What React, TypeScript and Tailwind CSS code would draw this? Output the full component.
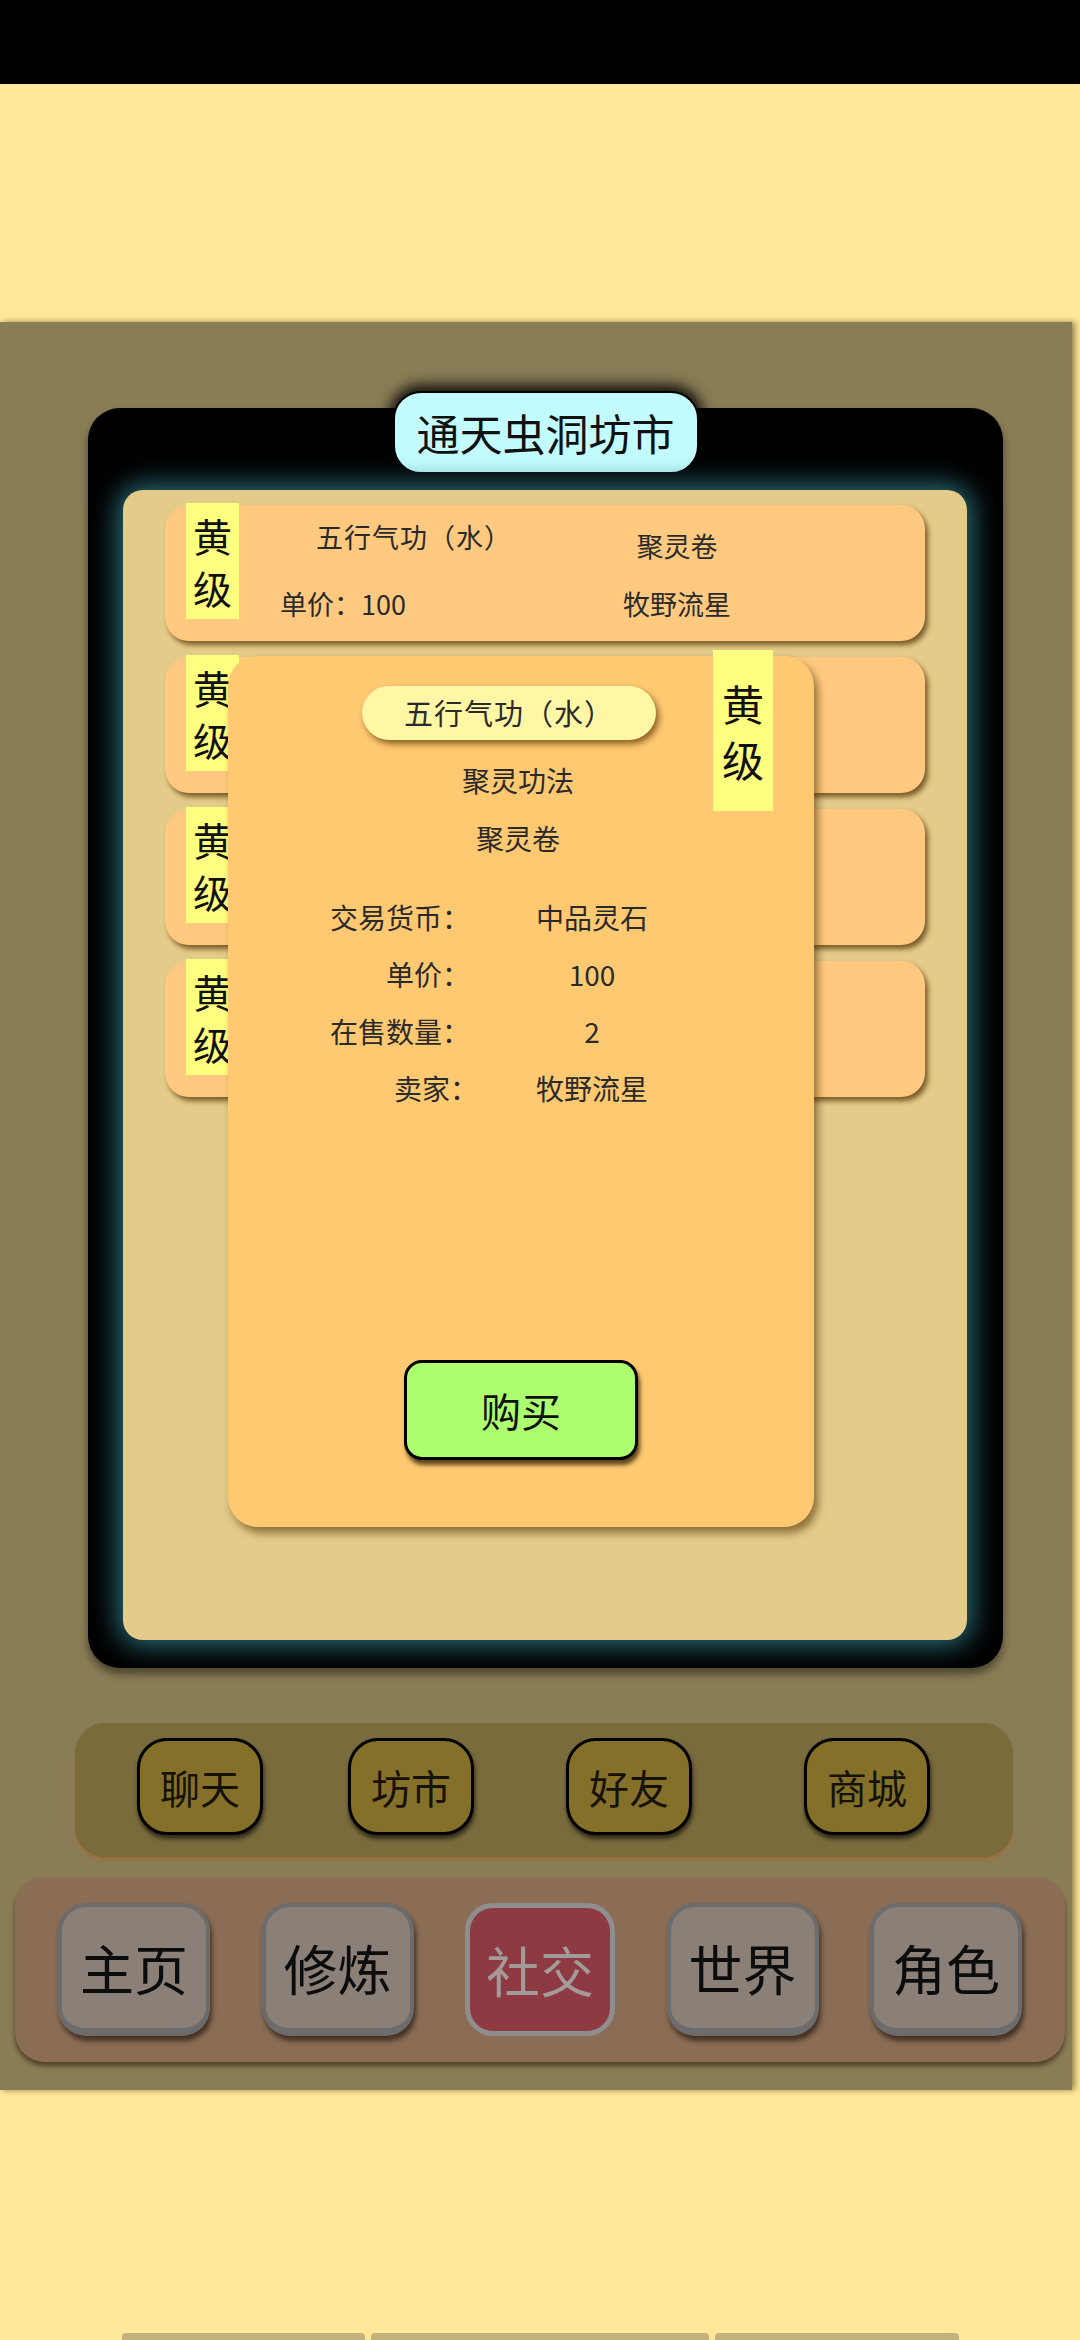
const font = "font-[family-name:'Noto_Sans_CJK_SC','Noto_Sans',sans-serif]"

// only the first row is visible above the modal; the rest are covered
const listings = [
  { name: '五行气功（水）', kind: '聚灵卷', price: 100, seller: '牧野流星', covered: false },
  { name: '五行气功（水）', kind: '聚灵卷', price: 100, seller: '牧野流星', covered: true },
  { name: '五行气功（水）', kind: '聚灵卷', price: 100, seller: '牧野流星', covered: true },
  { name: '五行气功（水）', kind: '聚灵卷', price: 100, seller: '牧野流星', covered: true },
]

const details = [
  { label: '交易货币：', value: '中品灵石', labelW: 'w-[242px]', gap: 'ml-[62px]' },
  { label: '单价：', value: '100', labelW: 'w-[242px]', gap: 'ml-[62px]' },
  { label: '在售数量：', value: '2', labelW: 'w-[242px]', gap: 'ml-[62px]' },
  { label: '卖家：', value: '牧野流星', labelW: 'w-[250px]', gap: 'ml-[54px]' },
]

const subTabs = [
  { label: '聊天', ml: 'ml-[62px]' },
  { label: '坊市', ml: 'ml-[85px]' },
  { label: '好友', ml: 'ml-[92px]' },
  { label: '商城', ml: 'ml-[112px]' },
]

const mainTabs = ['主页', '修炼', '社交', '世界', '角色']

function GradeBadge({ big }: { big?: boolean }) {
  return (
    <div
      className={
        big
          ? 'w-[60px] h-[161px] bg-[#ffff80] flex flex-col items-center justify-center text-[42px] leading-[56px] text-[#111]'
          : 'w-[53px] h-[116px] bg-[#ffff80] flex flex-col items-center justify-center text-[39px] leading-[52px] text-[#111]'
      }
    >
      <span>黄</span>
      <span>级</span>
    </div>
  )
}

function ListingRow({ item }: { item: (typeof listings)[number] }) {
  return (
    <div className="w-[760px] h-[136px] shrink-0 rounded-[24px] bg-[#ffca80] shadow-[3px_4px_5px_rgba(90,55,10,0.75)] flex items-start">
      <div className="ml-[21px] -mt-[2px]">
        <GradeBadge />
      </div>
      {!item.covered && (
        <div className="grid grid-cols-[330px_216px] text-[27px] leading-[38px] text-[#2a2a2a]">
          <span className="pl-[77px] pt-[13px] whitespace-nowrap tracking-[1px]">{item.name}</span>
          <span className="pt-[22px] text-center">{item.kind}</span>
          <span className="pl-[41px] pt-[20px]">单价：{item.price}</span>
          <span className="pt-[20px] text-center">{item.seller}</span>
        </div>
      )}
    </div>
  )
}

function DetailModal() {
  return (
    <div className="absolute left-[105px] top-[166px] w-[586px] h-[871px] rounded-[30px] bg-[#ffc972] shadow-[4px_6px_8px_rgba(80,50,0,0.6)] flex flex-col items-center">
      <div className="absolute right-[41px] -top-[6px]">
        <GradeBadge big />
      </div>
      <div className="mt-[30px] -ml-[24px] w-[294px] h-[54px] rounded-full bg-[#fff6a6] shadow-[3px_4px_6px_rgba(90,55,0,0.7)] flex items-center justify-center text-[29px] text-[#2a2a2a] tracking-[1px]">
        五行气功（水）
      </div>
      <div className="mt-[20px] -ml-[6px] text-[28px] leading-[40px] text-[#2a2a2a]">聚灵功法</div>
      <div className="mt-[18px] -ml-[6px] text-[28px] leading-[40px] text-[#2a2a2a]">聚灵卷</div>
      <div className="mt-[30px] self-stretch flex flex-col text-[28px] text-[#2a2a2a]">
        {details.map((d) => (
          <div key={d.label} className="h-[57px] flex items-center">
            <span className={`${d.labelW} text-right shrink-0`}>{d.label}</span>
            <span className={`${d.gap} w-[120px] text-center shrink-0`}>{d.value}</span>
          </div>
        ))}
      </div>
      <button className="mt-[244px] w-[234px] h-[100px] rounded-[18px] border-[3px] border-black bg-[#adff70] shadow-[2px_5px_4px_rgba(40,25,0,0.75)] text-[40px] text-[#111] flex items-center justify-center">
        购买
      </button>
    </div>
  )
}

export default function App() {
  return (
    <div className={`w-[1080px] h-[2340px] bg-[#ffe89b] flex flex-col overflow-hidden ${font}`}>
      <div className="h-[84px] bg-black shrink-0" />
      <div className="h-[238px] shrink-0" />

      <div className="w-[1072px] h-[1768px] shrink-0 bg-[#8a7d56] shadow-[3px_0_6px_rgba(60,45,10,0.55)] flex flex-col">
        {/* market window */}
        <div className="relative mt-[86px] ml-[88px] w-[915px] h-[1260px] rounded-[32px] bg-black shadow-[0_6px_8px_rgba(0,0,0,0.45)] pt-[82px] pl-[35px]">
          <div className="absolute left-1/2 -translate-x-1/2 -top-[17px] h-[83px] px-[22px] rounded-[28px] border-2 border-black bg-[#c2fcff] shadow-[0_-2px_14px_4px_rgba(0,0,0,0.9)] flex items-center text-[43px] text-[#111]">
            通天虫洞坊市
          </div>
          <div className="relative w-[844px] h-[1150px] rounded-[20px] bg-[#e3cb8a] shadow-[0_0_26px_6px_#2a6a74] pt-[15px] pl-[42px] flex flex-col gap-[16px]">
            {listings.map((l, i) => (
              <ListingRow key={i} item={l} />
            ))}
            <DetailModal />
          </div>
        </div>

        {/* sub navigation */}
        <div className="mt-[55px] ml-[75px] w-[938px] h-[134px] rounded-[30px] bg-[#7a6b3c] shadow-[0_3px_3px_rgba(170,100,40,0.55)] flex items-start pt-[15px]">
          {subTabs.map((t) => (
            <div
              key={t.label}
              className={`${t.ml} w-[126px] h-[97px] rounded-[30px] border-[3px] border-black bg-[#85702a] shadow-[1px_4px_4px_rgba(0,0,0,0.6)] flex items-center justify-center text-[40px] text-[#161208]`}
            >
              {t.label}
            </div>
          ))}
        </div>

        {/* main navigation */}
        <div className="mt-[20px] ml-[15px] w-[1050px] h-[185px] rounded-[30px] bg-[#8b6d55] shadow-[0_4px_5px_rgba(40,25,10,0.6)] flex items-center justify-between px-[43px]">
          {mainTabs.map((t) =>
            t === '社交' ? (
              <div
                key={t}
                className="w-[150px] h-[133px] rounded-[28px] border-[5px] border-[#8e8e8e] bg-[#8e3a42] flex items-center justify-center text-[54px] text-[#a39a9a]"
              >
                {t}
              </div>
            ) : (
              <div
                key={t}
                className="w-[152px] h-[133px] rounded-[28px] border-[4px] border-b-[8px] border-[#6c6c6c] bg-[#8a8078] shadow-[2px_5px_5px_rgba(20,10,0,0.6)] flex items-center justify-center text-[54px] text-[#0c0c0c]"
              >
                {t}
              </div>
            ),
          )}
        </div>
      </div>

      <div className="flex-1 flex items-end pl-[122px] gap-[6px]">
        <div className="w-[243px] h-[7px] rounded-t-[4px] bg-[#c4b27a]" />
        <div className="w-[338px] h-[7px] rounded-t-[4px] bg-[#c4b27a]" />
        <div className="w-[244px] h-[7px] rounded-t-[4px] bg-[#c4b27a]" />
      </div>
    </div>
  )
}
